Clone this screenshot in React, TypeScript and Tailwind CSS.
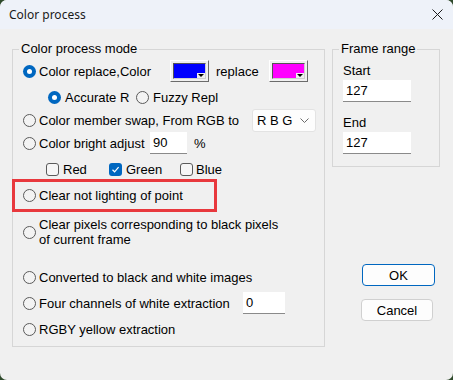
import React from 'react';

const FONT = { fontFamily: '"Liberation Sans", Arial, sans-serif' };

const Radio = ({ checked = false }: { checked?: boolean }) =>
    checked ? (
        <span className="w-[13px] h-[13px] rounded-full bg-[#0067c0] flex items-center justify-center shrink-0">
            <span className="w-[5px] h-[5px] rounded-full bg-white" />
        </span>
    ) : (
        <span className="w-[13px] h-[13px] rounded-full border border-[#5a5a5a] bg-[#f3f3f3] shrink-0" />
    );

const Check = ({ checked = false }: { checked?: boolean }) =>
    checked ? (
        <span className="w-[13px] h-[13px] rounded-[3px] bg-[#0067c0] flex items-center justify-center shrink-0">
            <svg width="9" height="9" viewBox="0 0 9 9">
                <path d="M1.5 4.8 L3.6 6.8 L7.6 2.2" fill="none" stroke="white" strokeWidth="1.2" />
            </svg>
        </span>
    ) : (
        <span className="w-[13px] h-[13px] rounded-[3px] border border-[#5a5a5a] bg-[#f6f6f6] shrink-0" />
    );

const ColorButton = ({ color }: { color: string }) => (
    <div className="relative w-[39px] h-[22px] border border-t-white border-l-white border-r-[#6b6b6b] border-b-[#6b6b6b] bg-[#f0f0f0] p-[2px] shrink-0">
        <div className="w-full h-full border border-t-[#555] border-l-[#555] border-r-[#cfcfcf] border-b-[#cfcfcf]" style={{ backgroundColor: color }} />
        <div className="absolute right-[3px] bottom-[3px] w-[8px] h-[5px] bg-[#f0f0f0] flex items-center justify-center">
            <svg width="6" height="3" viewBox="0 0 6 3">
                <path d="M0 0 H6 L3 3 Z" fill="#000" />
            </svg>
        </div>
    </div>
);

const TextBox = ({ value, className }: { value: string; className: string }) => (
    <div className={`bg-white border-b border-[#8a8a8a] flex items-center pl-[3px] text-[13px] text-black ${className}`}>
        {value}
    </div>
);

export default function App() {
    return (
        <div className="w-[453px] h-[380px] bg-[#2f4a2c]" style={FONT}>
            <div className="relative w-[453px] h-[380px] rounded-[7px] overflow-hidden bg-[#f0f0f0] text-[13px] leading-[15px] text-black">
                {/* title bar */}
                <div className="h-[29px] bg-[#eef2f9] flex items-center justify-between pl-[9px] pr-[10px]">
                    <span className="text-[12px] text-[#1a1a1a]" style={{ fontFamily: '"Noto Sans", "Liberation Sans", sans-serif' }}>
                        Color process
                    </span>
                    <svg width="11" height="11" viewBox="0 0 11 11">
                        <path d="M0.5 0.5 L10.5 10.5 M10.5 0.5 L0.5 10.5" stroke="#1a1a1a" strokeWidth="1" />
                    </svg>
                </div>

                <div className="flex items-start">
                    {/* left group */}
                    <fieldset className="ml-[12px] mt-[12px] w-[313px] h-[306px] border border-[#d6d6d6] px-0">
                        <legend className="ml-[6px] px-[2px] leading-[16px]">Color process mode</legend>
                        <div className="flex flex-col pl-[10px]">
                            <div className="h-[22px] mt-[3px] flex items-center">
                                <Radio checked />
                                <span className="ml-[3px] w-[131px]">Color replace,Color</span>
                                <ColorButton color="#0000ff" />
                                <span className="ml-[7px] w-[53px]">replace</span>
                                <ColorButton color="#ff00ff" />
                            </div>
                            <div className="h-[22px] mt-[4px] flex items-center pl-[25px]">
                                <Radio checked />
                                <span className="ml-[4px] w-[71px]">Accurate R</span>
                                <Radio />
                                <span className="ml-[4px]">Fuzzy Repl</span>
                            </div>
                            <div className="h-[24px] flex items-center">
                                <Radio />
                                <span className="ml-[3px] w-[213px]">Color member swap, From RGB to</span>
                                <div className="w-[64px] h-[23px] bg-[#fdfdfd] border border-[#e3e3e3] rounded-[3px] flex items-center justify-between pl-[4px] pr-[6px]">
                                    <span className="text-[13px]">R B G</span>
                                    <svg width="9" height="5" viewBox="0 0 9 5">
                                        <path d="M0.5 0.5 L4.5 4.5 L8.5 0.5" fill="none" stroke="#6a6a6a" strokeWidth="1" />
                                    </svg>
                                </div>
                            </div>
                            <div className="h-[22px] flex items-center">
                                <Radio />
                                <span className="ml-[3px] w-[111px]">Color bright adjust</span>
                                <TextBox value="90" className="w-[37px] h-[22px]" />
                                <span className="ml-[7px]">%</span>
                            </div>
                            <div className="h-[22px] mt-[4px] flex items-center pl-[23px]">
                                <Check />
                                <span className="ml-[4px] w-[46px]">Red</span>
                                <Check checked />
                                <span className="ml-[4px] w-[54px]">Green</span>
                                <Check />
                                <span className="ml-[3px]">Blue</span>
                            </div>
                            <div className="h-[22px] mt-[4px] flex items-center">
                                <Radio />
                                <span className="ml-[3px]">Clear not lighting of point</span>
                            </div>
                            <div className="h-[32px] mt-[10px] flex items-center">
                                <Radio />
                                <span className="ml-[3px]">
                                    Clear pixels corresponding to black pixels
                                    <br />
                                    of current frame
                                </span>
                            </div>
                            <div className="h-[22px] mt-[18px] flex items-center">
                                <Radio />
                                <span className="ml-[3px]">Converted to black and white images</span>
                            </div>
                            <div className="h-[22px] mt-[4px] flex items-center">
                                <Radio />
                                <span className="ml-[3px] w-[204px]">Four channels of white extraction</span>
                                <TextBox value="0" className="w-[42px] h-[22px]" />
                            </div>
                            <div className="h-[22px] mt-[4px] flex items-center">
                                <Radio />
                                <span className="ml-[3px]">RGBY yellow extraction</span>
                            </div>
                        </div>
                    </fieldset>

                    {/* right column */}
                    <div className="ml-[7px] flex flex-col">
                        <fieldset className="mt-[12px] w-[108px] h-[126px] border border-[#d6d6d6] px-0">
                            <legend className="ml-[6px] px-[2px] leading-[16px]">Frame range</legend>
                            <div className="flex flex-col pl-[10px]">
                                <span className="mt-[6px] leading-[16px]">Start</span>
                                <TextBox value="127" className="w-[68px] h-[22px] mt-[1px]" />
                                <span className="mt-[13px] leading-[16px]">End</span>
                                <TextBox value="127" className="w-[68px] h-[22px] mt-[1px]" />
                            </div>
                        </fieldset>
                        <button className="mt-[97px] ml-[30px] w-[73px] h-[22px] rounded-[4px] border border-[#0067c0] bg-[#fdfdfd] text-[13px] leading-[15px] flex items-center justify-center">
                            OK
                        </button>
                        <button className="mt-[13px] ml-[29px] w-[72px] h-[22px] rounded-[4px] border border-[#d0d0d0] bg-[#fdfdfd] text-[13px] leading-[15px] flex items-center justify-center">
                            Cancel
                        </button>
                    </div>
                </div>

                {/* annotation */}
                <div className="absolute left-[12px] top-[179px] w-[205px] h-[33px] border-[3px] border-[#e8383d]" />
            </div>
        </div>
    );
}
